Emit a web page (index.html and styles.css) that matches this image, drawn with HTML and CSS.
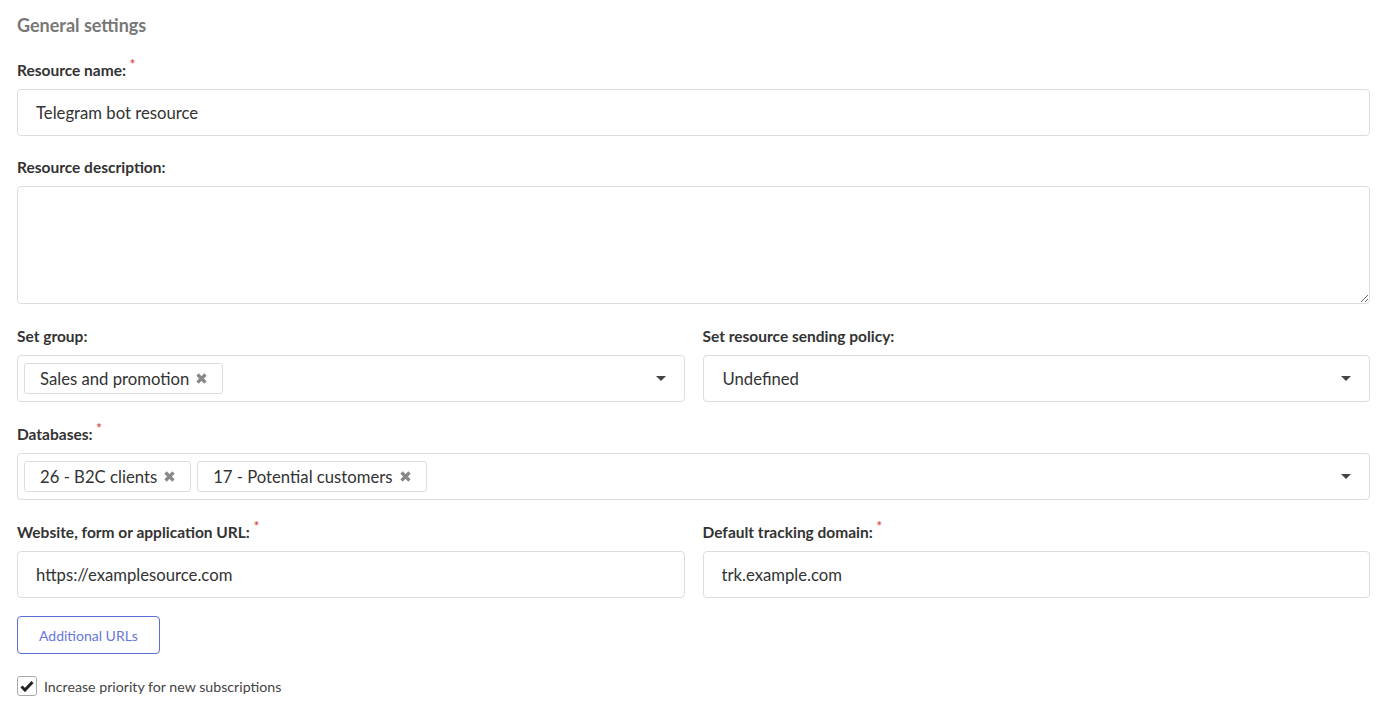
FILE: index.html
```html
<!DOCTYPE html>
<html lang="en">
<head>
  <meta charset="UTF-8">
  <meta name="viewport" content="width=device-width, initial-scale=1.0">
  <title>General settings</title>
  <link rel="stylesheet" href="styles.css">
</head>
<body>
  <h2 class="section-title">General settings</h2>

  <div class="field first">
    <label class="field-label">Resource name: <span class="req">*</span></label>
    <input class="text-input" type="text" value="Telegram bot resource">
  </div>

  <div class="field">
    <label class="field-label">Resource description:</label>
    <textarea class="text-area"></textarea>
  </div>

  <div class="row">
    <div class="field">
      <label class="field-label">Set group:</label>
      <div class="select-box">
        <div class="tags">
          <span class="tag">Sales and promotion
            <svg class="tag-x" width="11" height="11" viewBox="0 0 11 11"><path d="M1.5 1.5 L9.5 9.5 M9.5 1.5 L1.5 9.5" stroke="#888" stroke-width="3.2"/></svg>
          </span>
        </div>
        <span class="caret"></span>
      </div>
    </div>
    <div class="field">
      <label class="field-label">Set resource sending policy:</label>
      <div class="select-box single">
        <span class="select-value">Undefined</span>
        <span class="caret"></span>
      </div>
    </div>
  </div>

  <div class="field">
    <label class="field-label">Databases: <span class="req">*</span></label>
    <div class="select-box">
      <div class="tags">
        <span class="tag">26 - B2C clients
          <svg class="tag-x" width="11" height="11" viewBox="0 0 11 11"><path d="M1.5 1.5 L9.5 9.5 M9.5 1.5 L1.5 9.5" stroke="#888" stroke-width="3.2"/></svg>
        </span>
        <span class="tag">17 - Potential customers
          <svg class="tag-x" width="11" height="11" viewBox="0 0 11 11"><path d="M1.5 1.5 L9.5 9.5 M9.5 1.5 L1.5 9.5" stroke="#888" stroke-width="3.2"/></svg>
        </span>
      </div>
      <span class="caret"></span>
    </div>
  </div>

  <div class="row">
    <div class="field">
      <label class="field-label">Website, form or application URL: <span class="req">*</span></label>
      <input class="text-input" type="text" value="https://examplesource.com">
    </div>
    <div class="field">
      <label class="field-label">Default tracking domain: <span class="req">*</span></label>
      <input class="text-input" type="text" value="trk.example.com">
    </div>
  </div>

  <button class="btn-outline" type="button">Additional URLs</button>

  <label class="check">
    <span class="check-box">
      <svg width="14" height="12" viewBox="0 0 14 12"><path d="M1.5 6.5 L5 10 L12.5 2" fill="none" stroke="#222" stroke-width="3"/></svg>
    </span>
    Increase priority for new subscriptions
  </label>
</body>
</html>
```

FILE: styles.css
```css
body {
  font-family: Lato, "Liberation Sans", sans-serif;
  margin: 0;
  padding: 13px 17px 0 17px;
  color: #333;
  background: #fff;
}

.section-title {
  margin: 0 0 23px 0;
  font-size: 18px;
  line-height: 24px;
  font-weight: 700;
  color: #777;
}

.field {
  margin-bottom: 22px;
}

.field.first {
  margin-bottom: 21px;
}

.field-label {
  display: block;
  font-size: 15.5px;
  line-height: 20px;
  font-weight: 700;
  color: #333;
  margin-bottom: 9px;
}

.req {
  color: #d9534f;
  font-size: 13px;
  vertical-align: top;
  position: relative;
  top: -6px;
}

.text-input {
  display: block;
  box-sizing: border-box;
  width: 100%;
  height: 47px;
  padding: 0 18px;
  border: 1px solid #ddd;
  border-radius: 4px;
  font-family: inherit;
  font-size: 16.7px;
  color: #333;
  outline: none;
}

.text-area {
  display: block;
  box-sizing: border-box;
  width: 100%;
  height: 118px;
  border: 1px solid #ddd;
  border-radius: 4px;
  font-family: inherit;
  font-size: 17px;
}

.row {
  display: grid;
  grid-template-columns: 1fr 1fr;
  column-gap: 18px;
}

.select-box {
  box-sizing: border-box;
  height: 47px;
  border: 1px solid #ddd;
  border-radius: 4px;
  display: flex;
  align-items: center;
  padding: 0 18px 0 6px;
}

.select-box.single {
  padding-left: 19px;
}

.select-value {
  flex: 1;
  font-size: 16.7px;
}

.tags {
  flex: 1;
  display: flex;
  gap: 6px;
}

.tag {
  box-sizing: border-box;
  height: 31px;
  display: inline-flex;
  align-items: center;
  padding: 0 15px 0 15px;
  border: 1px solid #ddd;
  border-radius: 3px;
  font-size: 16.7px;
  color: #333;
}

.tag-x {
  margin-left: 7px;
}

.caret {
  width: 0;
  height: 0;
  border-left: 5px solid transparent;
  border-right: 5px solid transparent;
  border-top: 5px solid #444;
}

.btn-outline {
  display: block;
  height: 38px;
  padding: 0 21px;
  border: 1px solid #5b6fd8;
  border-radius: 4px;
  background: #fff;
  color: #6677d9;
  font-family: inherit;
  font-size: 14px;
  cursor: pointer;
  margin-top: -4px;
}

.check {
  display: flex;
  align-items: center;
  gap: 7px;
  margin-top: 22px;
  font-size: 14.2px;
  color: #444;
}

.check-box {
  box-sizing: border-box;
  width: 20px;
  height: 20px;
  border: 1px solid #aaa;
  border-radius: 3px;
  display: flex;
  align-items: center;
  justify-content: center;
}
```
